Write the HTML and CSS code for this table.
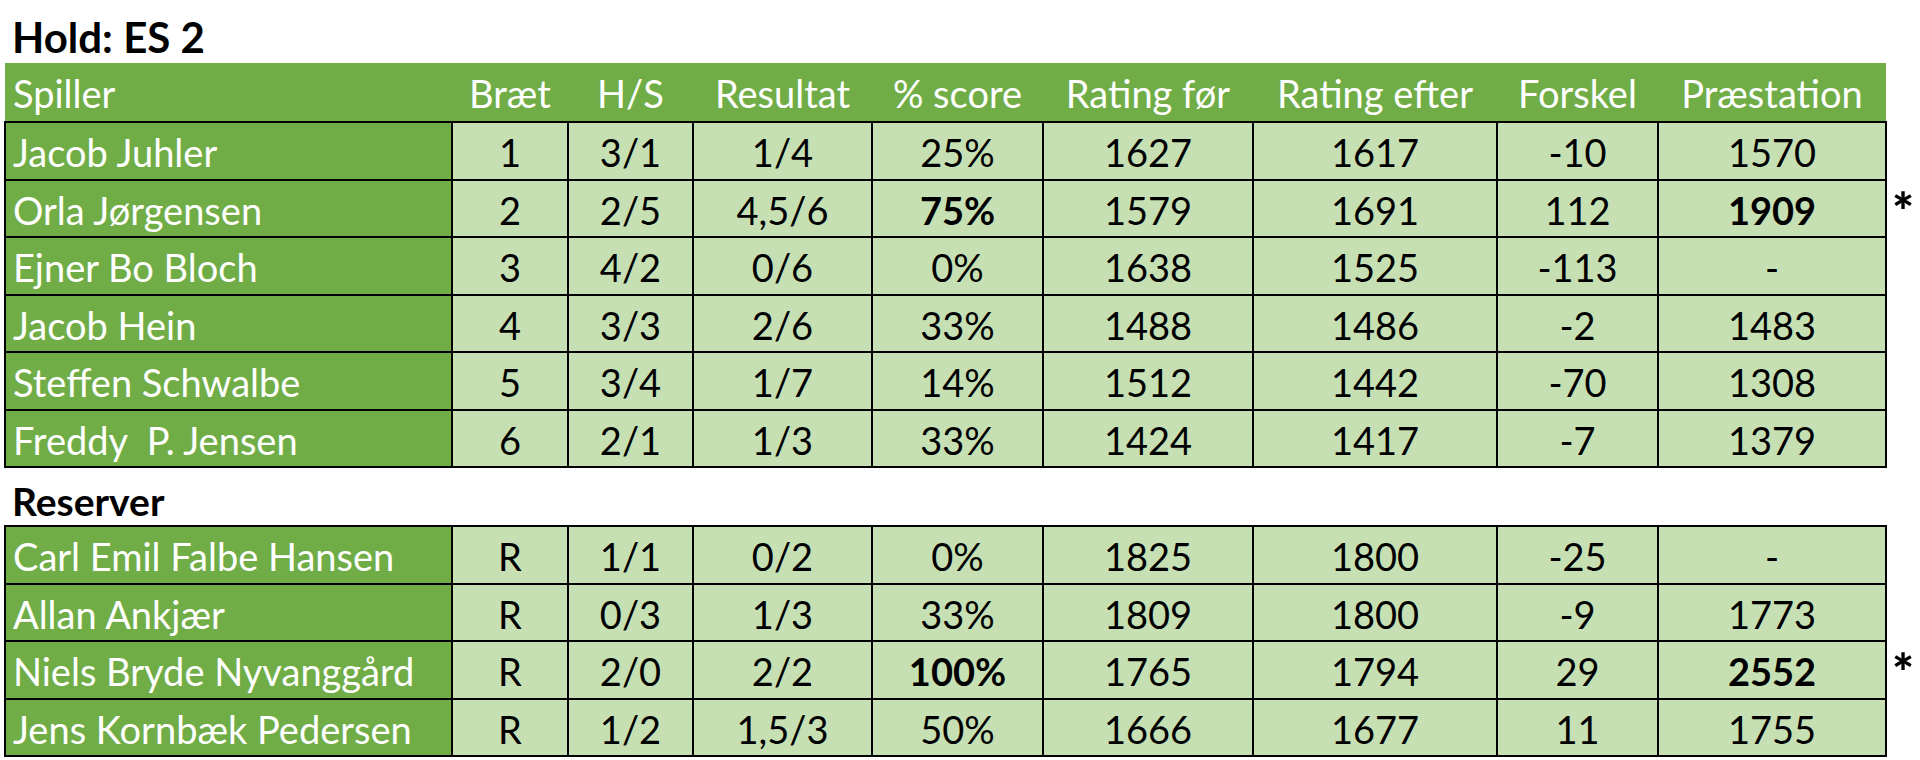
FILE: index.html
```html
<!DOCTYPE html>
<html lang="da">
<head>
<meta charset="utf-8">
<title>Hold: ES 2</title>
<link rel="stylesheet" href="styles.css">
</head>
<body>
<div class="sheet">
  <h1 class="title">Hold: ES 2</h1>
  <table class="grid">
    <colgroup>
      <col class="c-name"><col class="c-brat"><col class="c-hs"><col class="c-res"><col class="c-pct"><col class="c-rf"><col class="c-re"><col class="c-diff"><col class="c-perf"><col class="c-note">
    </colgroup>
    <thead>
      <tr class="head">
        <th class="name">Spiller</th><th>Bræt</th><th>H/S</th><th>Resultat</th><th>% score</th><th>Rating før</th><th>Rating efter</th><th>Forskel</th><th>Præstation</th><th class="note"></th>
      </tr>
    </thead>
    <tbody>
      <tr><td class="name">Jacob Juhler</td><td>1</td><td>3/1</td><td>1/4</td><td>25%</td><td>1627</td><td>1617</td><td>-10</td><td>1570</td><td class="note"></td></tr>
      <tr><td class="name">Orla Jørgensen</td><td>2</td><td>2/5</td><td>4,5/6</td><td class="b">75%</td><td>1579</td><td>1691</td><td>112</td><td class="b">1909</td><td class="note">*</td></tr>
      <tr><td class="name">Ejner Bo Bloch</td><td>3</td><td>4/2</td><td>0/6</td><td>0%</td><td>1638</td><td>1525</td><td>-113</td><td>-</td><td class="note"></td></tr>
      <tr><td class="name">Jacob Hein</td><td>4</td><td>3/3</td><td>2/6</td><td>33%</td><td>1488</td><td>1486</td><td>-2</td><td>1483</td><td class="note"></td></tr>
      <tr><td class="name">Steffen Schwalbe</td><td>5</td><td>3/4</td><td>1/7</td><td>14%</td><td>1512</td><td>1442</td><td>-70</td><td>1308</td><td class="note"></td></tr>
      <tr><td class="name">Freddy&nbsp; P. Jensen</td><td>6</td><td>2/1</td><td>1/3</td><td>33%</td><td>1424</td><td>1417</td><td>-7</td><td>1379</td><td class="note"></td></tr>
    </tbody>
  </table>
  <h2 class="subtitle">Reserver</h2>
  <table class="grid">
    <colgroup>
      <col class="c-name"><col class="c-brat"><col class="c-hs"><col class="c-res"><col class="c-pct"><col class="c-rf"><col class="c-re"><col class="c-diff"><col class="c-perf"><col class="c-note">
    </colgroup>
    <tbody>
      <tr><td class="name">Carl Emil Falbe Hansen</td><td>R</td><td>1/1</td><td>0/2</td><td>0%</td><td>1825</td><td>1800</td><td>-25</td><td>-</td><td class="note"></td></tr>
      <tr><td class="name">Allan Ankjær</td><td>R</td><td>0/3</td><td>1/3</td><td>33%</td><td>1809</td><td>1800</td><td>-9</td><td>1773</td><td class="note"></td></tr>
      <tr><td class="name">Niels Bryde Nyvanggård</td><td>R</td><td>2/0</td><td>2/2</td><td class="b">100%</td><td>1765</td><td>1794</td><td>29</td><td class="b">2552</td><td class="note">*</td></tr>
      <tr><td class="name">Jens Kornbæk Pedersen</td><td>R</td><td>1/2</td><td>1,5/3</td><td>50%</td><td>1666</td><td>1677</td><td>11</td><td>1755</td><td class="note"></td></tr>
    </tbody>
  </table>
</div>
</body>
</html>
```

FILE: styles.css
```css
html, body {
  margin: 0;
  padding: 0;
  background: #ffffff;
}

body {
  font-family: Lato, "Liberation Sans", sans-serif;
  color: #000000;
}

.sheet {
  padding: 0 0 0 4px;
  width: 1916px;
}

.title {
  margin: 0;
  height: 63px;
  padding: 0 0 0 8px;
  box-sizing: border-box;
  font-size: 42px;
  font-weight: 700;
  line-height: 74px;
}

.subtitle {
  margin: 0;
  height: 57px;
  padding: 0 0 0 8px;
  box-sizing: border-box;
  font-size: 39px;
  font-weight: 700;
  line-height: 66px;
}

.grid {
  border-collapse: collapse;
  table-layout: fixed;
  font-size: 38px;
}

.c-name { width: 447px; }
.c-brat { width: 116px; }
.c-hs { width: 125px; }
.c-res { width: 179px; }
.c-pct { width: 171px; }
.c-rf { width: 210px; }
.c-re { width: 244px; }
.c-diff { width: 161px; }
.c-perf { width: 228px; }
.c-note { width: 30px; }

.grid th,
.grid td {
  padding: 0;
  text-align: center;
  vertical-align: middle;
  white-space: nowrap;
  overflow: hidden;
}

.head th {
  height: 56px;
  background: #70ad47;
  color: #ffffff;
  font-weight: 400;
  padding-top: 2px;
  line-height: 50px;
}

.head th.name {
  text-align: left;
  padding-left: 8px;
}

.head th.note {
  background: transparent;
}

.grid td {
  height: 52.5px;
  line-height: 50px;
  border: 2px solid #000000;
  background: #c6e0b4;
  padding-top: 3px;
}

.grid td.name {
  background: #70ad47;
  color: #ffffff;
  text-align: left;
  padding-left: 7px;
}

.grid td.note {
  border: none;
  background: transparent;
  text-align: left;
  padding-left: 5px;
  font-weight: 900;
  font-size: 52px;
  overflow: visible;
}

.b {
  font-weight: 700;
}
```
